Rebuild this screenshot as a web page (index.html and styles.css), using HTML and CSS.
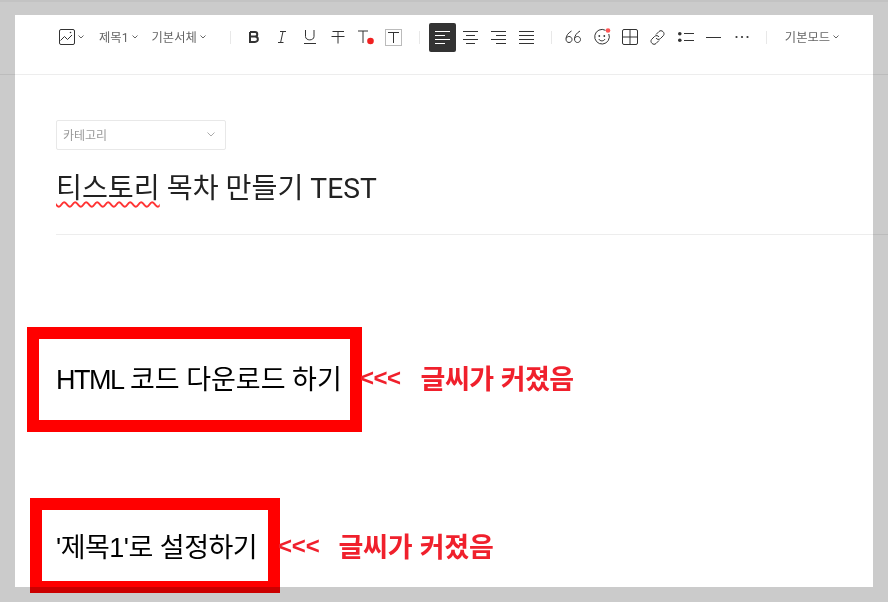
FILE: index.html
```html
<!DOCTYPE html>
<html lang="ko">
<head>
  <meta charset="UTF-8" />
  <meta name="viewport" content="width=device-width, initial-scale=1.0"/>
  <title>티스토리 목차 만들기 TEST</title>
  <link rel="stylesheet" href="styles.css">
</head>
<body>
  <div class="editor">
    <!-- 툴바 -->
    <div class="toolbar">
      <div class="tool-group first">
        <span class="tool-drop">
          <svg class="icon" width="16" height="16" viewBox="0 0 16 16"><rect x=".5" y=".5" width="15" height="15" rx="1.500"/><path d="M1.500 11.500 L5.500 7.500 L8.500 10.500 L13 6"/><circle class="fill" cx="11.500" cy="3.500" r=".8"/></svg>
          <svg class="caret" width="6" height="4" viewBox="0 0 6 4"><path d="M.5 .5 L3 3 L5.500 .5"/></svg>
        </span>
        <span class="tool-drop heading">제목1<svg class="caret" width="6" height="4" viewBox="0 0 6 4"><path d="M.5 .5 L3 3 L5.500 .5"/></svg></span>
        <span class="tool-drop font">기본서체<svg class="caret" width="6" height="4" viewBox="0 0 6 4"><path d="M.5 .5 L3 3 L5.500 .5"/></svg></span>
      </div>
      <i class="sep sep-a"></i>
      <div class="tool-group fmt">
        <span class="btn"><svg class="icon bold" width="14" height="14" viewBox="0 0 14 14"><path d="M3 2 H8 C11 2 11 6.600 8 6.600 H3 M8 6.600 C11.800 6.600 11.800 12 8 12 H3 V2"/></svg></span>
        <span class="btn"><svg class="icon" width="14" height="14" viewBox="0 0 14 14"><path d="M5 1.500 H11 M3 12.500 H8.500 M8 1.500 L5.600 12.500"/></svg></span>
        <span class="btn"><svg class="icon" width="14" height="16" viewBox="0 0 14 16"><path d="M2.500 1 V7.500 C2.500 12 11 12 11 7.500 V1 M1 14.500 H13"/></svg></span>
        <span class="btn"><svg class="icon" width="14" height="14" viewBox="0 0 14 14"><path d="M1.500 1.500 H13 M0.500 6.500 H13.500 M7 1.500 V13.500"/></svg></span>
        <span class="btn"><svg class="icon" width="18" height="16" viewBox="0 0 18 16"><path d="M1 2 H11 M6 2 V14"/><circle class="red" cx="13.500" cy="12" r="3.300"/></svg></span>
        <span class="btn"><svg class="icon" width="17" height="17" viewBox="0 0 17 17"><rect class="soft" x=".5" y=".5" width="16" height="16"/><path d="M3 3.500 H14 M8.500 3.500 V14"/></svg></span>
      </div>
      <i class="sep sep-b"></i>
      <div class="tool-group align">
        <span class="btn on"><svg class="icon" width="16" height="14" viewBox="0 0 16 14"><path d="M1 1.500 H16 M1 5.500 H11 M1 9.500 H16 M1 13.500 H11"/></svg></span>
        <span class="btn"><svg class="icon" width="16" height="14" viewBox="0 0 16 14"><path d="M0 1.500 H15 M3 5.500 H12 M0 9.500 H15 M3 13.500 H12"/></svg></span>
        <span class="btn"><svg class="icon" width="16" height="14" viewBox="0 0 16 14"><path d="M0 1.500 H15 M5 5.500 H15 M0 9.500 H15 M5 13.500 H15"/></svg></span>
        <span class="btn"><svg class="icon" width="16" height="14" viewBox="0 0 16 14"><path d="M0 1.500 H15 M0 5.500 H15 M0 9.500 H15 M0 13.500 H15"/></svg></span>
      </div>
      <i class="sep sep-c"></i>
      <div class="tool-group insert">
        <span class="btn"><svg class="icon" width="17" height="14" viewBox="0 0 17 14"><path d="M6.500 1 C3 3 1 6 1 9 C1 11 2.200 12.500 4 12.500 C5.700 12.500 7 11.200 7 9.500 C7 7.800 5.700 6.500 4 6.500 C2.800 6.500 1.800 7.200 1.300 8.200 M15 1 C11.500 3 9.500 6 9.500 9 C9.500 11 10.700 12.500 12.500 12.500 C14.200 12.500 15.500 11.200 15.500 9.500 C15.500 7.800 14.200 6.500 12.500 6.500 C11.300 6.500 10.300 7.200 9.800 8.200"/></svg></span>
        <span class="btn"><svg class="icon" width="18" height="18" viewBox="0 0 18 18"><path d="M12.500 2.300 A7.300 7.300 0 1 0 15.800 6"/><circle class="fill" cx="6.300" cy="8" r=".9"/><circle class="fill" cx="11.300" cy="8" r=".9"/><path d="M5.800 11 C7 13.500 10.800 13.500 12 11"/><circle class="dot" cx="15" cy="2.500" r="2.300"/></svg></span>
        <span class="btn"><svg class="icon" width="16" height="16" viewBox="0 0 16 16"><rect x=".5" y=".5" width="15" height="15" rx="1.500"/><path d="M8 .5 V15.500 M.5 8 H15.500"/></svg></span>
        <span class="btn"><svg class="icon" width="17" height="17" viewBox="0 0 17 17"><path d="M7 5.500 L10 2.500 C12.500 0 16.800 4 14.200 6.800 L11.500 9.500 C10 11 7.800 10.500 7 9 M10 11.500 L7 14.500 C4.500 17 .2 13 2.800 10.200 L5.500 7.500 C7 6 9.200 6.500 10 8"/></svg></span>
        <span class="btn"><svg class="icon" width="16" height="10" viewBox="0 0 16 10"><circle class="fill" cx="1.800" cy="1.800" r="1.800"/><circle class="fill" cx="1.800" cy="8.200" r="1.800"/><path d="M6 1.500 H16 M6 8.500 H16"/></svg></span>
        <span class="btn"><svg class="icon" width="16" height="4" viewBox="0 0 16 4"><path d="M0 2.500 H15"/></svg></span>
        <span class="btn"><svg class="icon" width="14" height="4" viewBox="0 0 14 4"><circle class="fill" cx="1.500" cy="2" r="1.100"/><circle class="fill" cx="7" cy="2" r="1.100"/><circle class="fill" cx="12.500" cy="2" r="1.100"/></svg></span>
      </div>
      <i class="sep sep-d"></i>
      <span class="tool-drop mode">기본모드<svg class="caret" width="6" height="4" viewBox="0 0 6 4"><path d="M.5 .5 L3 3 L5.500 .5"/></svg></span>
    </div>

    <!-- 본문 -->
    <div class="content">
      <div class="category">
        <span>카테고리</span>
        <svg width="8" height="5" viewBox="0 0 8 5"><path d="M.5 .5 L4 4 L7.500 .5"/></svg>
      </div>
      <div class="title"><span class="typo">티스토리</span> 목차 만들기 TEST</div>
      <div class="rule"></div>
    </div>
  </div>

  <!-- 빨간 표시 -->
  <div class="mark mark-one"><span><span class="latin">HTML</span> 코드 다운로드 하기</span></div>
  <div class="note note-one"><span class="arrows">&lt;&lt;&lt;</span><span>글씨가 커졌음</span></div>
  <div class="mark mark-two"><span>'제목1'로 설정하기</span></div>
  <div class="note note-two"><span class="arrows">&lt;&lt;&lt;</span><span>글씨가 커졌음</span></div>
</body>
</html>
```

FILE: styles.css
```css
body {
  margin: 0;
  height: 602px;
  overflow: hidden;
  position: relative;
  background: #cbcbcb;
  border-top: 2px solid #c3c3c3;
  box-sizing: border-box;
  padding: 13px 15px 15px;
  font-family: Roboto, "Noto Sans CJK KR", sans-serif;
  color: #222;
}

.editor {
  height: 100%;
  background: #fff;
}

/* 툴바 - 구분선이 회색 바깥까지 이어짐 */
.toolbar {
  height: 60px;
  box-sizing: border-box;
  margin: 0 -15px;
  border-bottom: 1px solid rgba(0,0,0,0.07);
  padding: 0 0 15px 59px;
  display: flex;
  align-items: center;
  font-size: 12.3px;
  color: #666;
}
.tool-group {
  display: flex;
  align-items: center;
}
.tool-drop {
  display: inline-flex;
  align-items: center;
  gap: 3px;
  white-space: nowrap;
}
.first .heading { margin-left: 15px; }
.first .font { margin-left: 14px; }
.sep {
  width: 1px;
  height: 13px;
  background: #e8e8e8;
}
.sep-a { margin: 0 9px 0 24px; }
.sep-b { margin: 0 9px 0 11px; }
.sep-c { margin: 0 8px 0 10px; }
.sep-d { margin: 0 18px 0 10px; }

.icon {
  fill: none;
  stroke: #333;
  stroke-width: 1;
  display: block;
}
.icon .fill { fill: #333; stroke: none; }
.icon .red { fill: #f02020; stroke: none; }
.icon .dot { fill: #f55; stroke: none; }
.icon .soft { stroke: #bbb; }
.icon.bold { stroke-width: 2; }
.caret {
  fill: none;
  stroke: #666;
  stroke-width: 1;
}

.btn {
  width: 28px;
  height: 29px;
  display: flex;
  align-items: center;
  justify-content: center;
}
.btn.on {
  width: 27px;
  margin-right: 1px;
  background: #333;
  border-radius: 2px;
}
.btn.on .icon { stroke: #fff; }

/* 본문 */
.content {
  padding: 45px 0 0 41px;
}
.category {
  width: 170px;
  height: 30px;
  box-sizing: border-box;
  border: 1px solid #e8e8e8;
  border-radius: 2px;
  display: flex;
  align-items: center;
  justify-content: space-between;
  padding: 0 10px 2px 6px;
  font-size: 12px;
  color: #999;
}
.category svg {
  fill: none;
  stroke: #aaa;
}
.title {
  margin-top: 20px;
  font-size: 28.2px;
  line-height: 38px;
  color: #222;
  white-space: nowrap;
}
.typo {
  text-decoration: underline wavy #f33 1.5px;
  text-underline-offset: 3px;
}
.rule {
  margin: 26px -15px 0 0;
  height: 1px;
  background: rgba(0,0,0,0.07);
}

/* 빨간 표시 */
.mark {
  position: absolute;
  box-sizing: border-box;
  border: 12px solid #f00;
  display: flex;
  align-items: center;
  mix-blend-mode: multiply;
  white-space: nowrap;
  color: #000;
  font-family: "Liberation Sans", "Noto Sans CJK KR", sans-serif;
  font-size: 27px;
}
.mark-one {
  left: 27px;
  top: 325px;
  width: 335px;
  height: 105px;
  padding: 0 0 4px 17px;
  word-spacing: -1px;
}
.latin {
  letter-spacing: -1.500px;
}
.mark-two {
  left: 30px;
  top: 496px;
  width: 250px;
  height: 95px;
  padding-left: 14px;
  letter-spacing: -0.500px;
}
.note {
  position: absolute;
  display: flex;
  font-family: "Noto Sans CJK KR", sans-serif;
  font-size: 27px;
  font-weight: 700;
  line-height: 36px;
  color: #f0202c;
  white-space: nowrap;
}
.arrows {
  font-family: "Liberation Sans", sans-serif;
  font-size: 24px;
}
.note-one { left: 360px; top: 358px; gap: 20px; letter-spacing: -0.500px; }
.note-two { left: 278px; top: 526px; gap: 19px; letter-spacing: -0.200px; }
```
